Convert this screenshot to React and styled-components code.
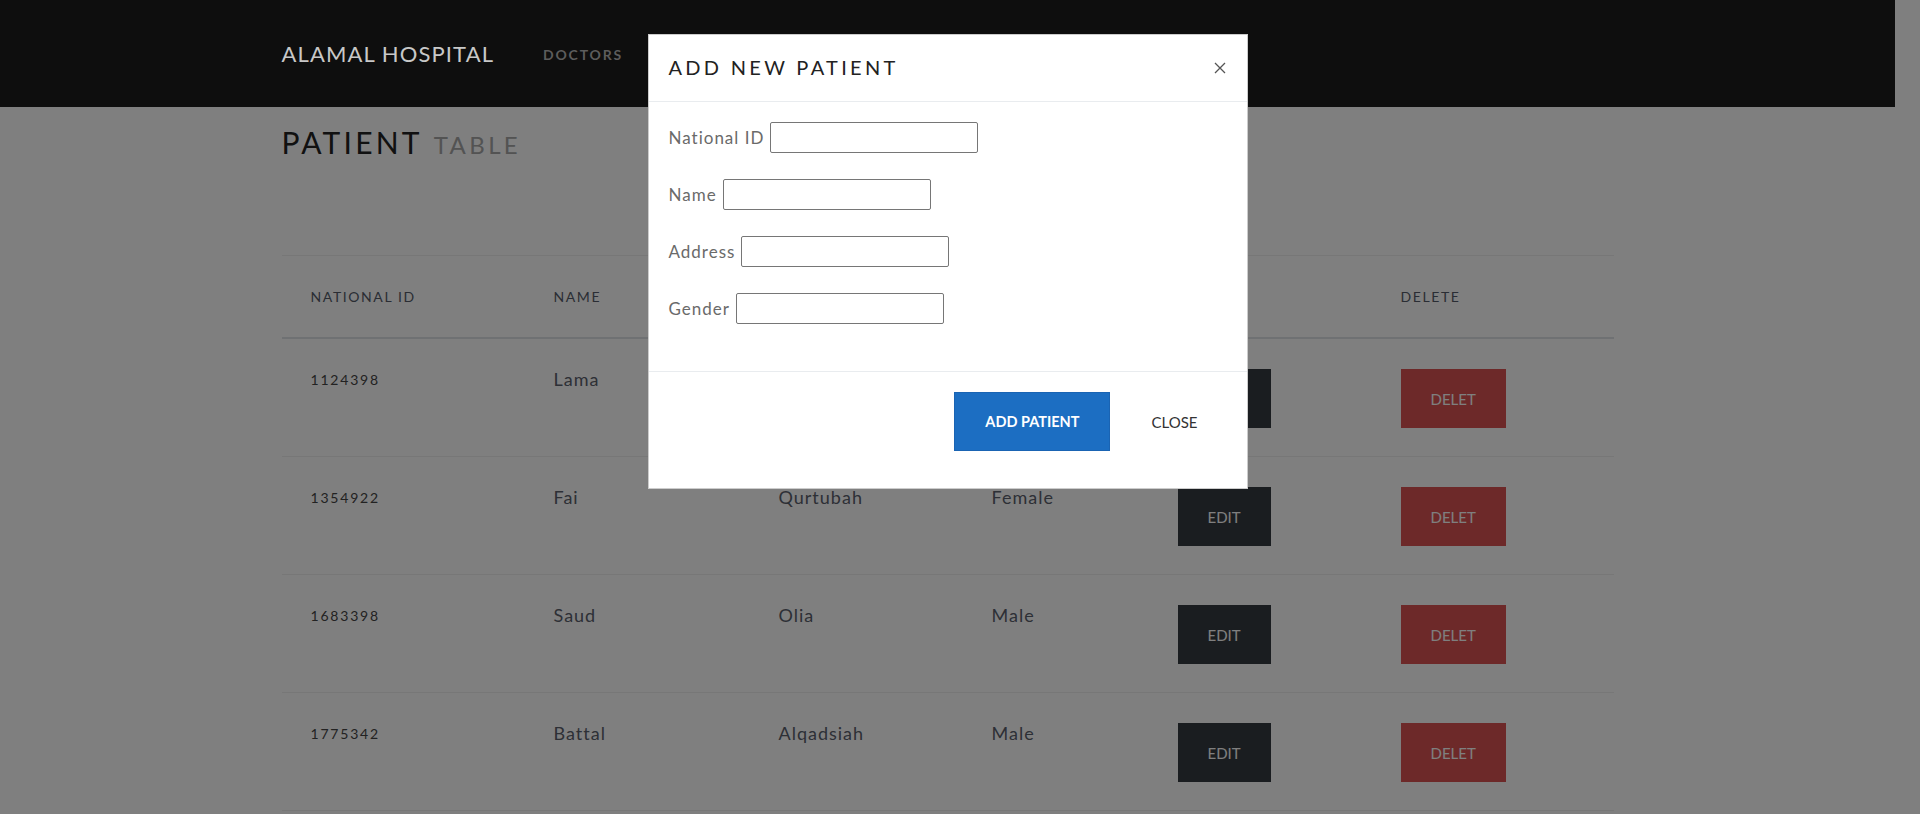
import React from "react";
import styled, { createGlobalStyle } from "styled-components";

const GlobalStyle = createGlobalStyle`
  html, body { margin: 0; padding: 0; }
  body {
    background: #ffffff;
    font-family: Lato, "Open Sans", Arial, sans-serif;
    overflow: hidden;
    padding-right: 25px;
  }
  * { box-sizing: border-box; }
`;

const Navbar = styled.nav`
  position: relative;
  z-index: 20;
  height: 107px;
  background: #0e0e0e;
`;

const Container = styled.div`
  max-width: 1332px;
  margin: 0 auto;
`;

const NavInner = styled(Container)`
  height: 100%;
  display: flex;
  align-items: center;
  gap: 49px;
`;

const Brand = styled.a`
  font-size: 22px;
  letter-spacing: 1.1px;
  color: #c8c8c8;
  text-decoration: none;
  padding-bottom: 1px;
`;

const NavLink = styled.a`
  font-size: 14px;
  font-weight: 700;
  letter-spacing: 1.8px;
  color: #5c5c5c;
  text-decoration: none;
  padding-top: 2px;
`;

const Heading = styled.h1`
  margin: 17px 0 92px;
  font-size: 30px;
  line-height: 36px;
  font-weight: 400;
  letter-spacing: 3.2px;
  color: #222;
`;

const HeadingSub = styled.span`
  font-size: 24px;
  letter-spacing: 3.4px;
  color: #a6a6a6;
  margin-left: 11px;
`;

const Table = styled.table`
  width: 100%;
  table-layout: fixed;
  border-collapse: collapse;
  border-top: 1px solid #eeeeee;
`;

const Col = styled.col`
  width: ${(p) => p.$w}px;
`;

const HeadCell = styled.th`
  text-align: left;
  padding: 30px 29px 30px;
  font-size: 14px;
  line-height: 21px;
  font-weight: 400;
  letter-spacing: 1.6px;
  color: #555b69;
  border-bottom: 2px solid #dee2e6;
`;

const BodyRow = styled.tr`
  border-bottom: 1px solid #eeeeee;
`;

const IdCell = styled.th`
  text-align: left;
  vertical-align: top;
  padding: 30px 29px 28px;
  font-size: 14px;
  line-height: 21px;
  font-weight: 400;
  letter-spacing: 1.8px;
  color: #454545;
`;

const Cell = styled.td`
  vertical-align: top;
  padding: 30px 29px 28px;
  font-size: 18px;
  line-height: 21px;
  letter-spacing: 1px;
  color: #5b606c;
`;

const RowButton = styled.button`
  display: block;
  height: 59px;
  padding: 0 30px;
  border: none;
  border-radius: 0;
  font-family: inherit;
  font-size: 15px;
  color: #ffffff;
  background: ${(p) => (p.$danger ? "#da5353" : "#343a40")};
`;

const Backdrop = styled.div`
  position: fixed;
  inset: 0;
  z-index: 10;
  background: rgba(0, 0, 0, 0.5);
`;

const ModalLayer = styled.div`
  position: fixed;
  inset: 0;
  z-index: 30;
  padding: 34px 25px 0 0;
  display: flex;
  justify-content: center;
  align-items: flex-start;
`;

const Modal = styled.div`
  width: 600px;
  background: #ffffff;
  border: 1px solid rgba(0, 0, 0, 0.2);
`;

const ModalHeader = styled.div`
  height: 67px;
  padding: 0 20px 3px;
  display: flex;
  align-items: center;
  justify-content: space-between;
  border-bottom: 1px solid #e9ecef;
`;

const ModalTitle = styled.h5`
  margin: 0;
  font-size: 20px;
  font-weight: 400;
  letter-spacing: 3.3px;
  color: #222;
`;

const CloseX = styled.button`
  border: none;
  background: none;
  padding: 0;
  width: 12px;
  height: 12px;
  display: flex;
  margin-top: 2px;
  margin-right: 1px;
`;

const ModalBody = styled.div`
  padding: 20px 20px 47px;
  display: flex;
  flex-direction: column;
  gap: 26px;
`;

const Field = styled.div`
  display: flex;
  align-items: center;
  gap: 6px;
`;

const Label = styled.label`
  font-size: 17px;
  letter-spacing: 1px;
  color: #6a6a6a;
`;

const Input = styled.input`
  width: 208px;
  height: 31px;
  border: 1px solid #767676;
  border-radius: 2px;
  padding: 0 4px;
  font-family: inherit;
  font-size: 15px;
`;

const ModalFooter = styled.div`
  border-top: 1px solid #e9ecef;
  padding: 20px 18px 37px;
  display: flex;
  justify-content: flex-end;
  gap: 10px;
`;

const FooterButton = styled.button`
  height: 59px;
  padding: 0 30px;
  border: 1px solid ${(p) => (p.$primary ? "#1a64b3" : "transparent")};
  border-radius: 0;
  background: ${(p) => (p.$primary ? "#1c6ec2" : "transparent")};
  color: ${(p) => (p.$primary ? "#ffffff" : "#333333")};
  font-family: inherit;
  font-size: ${(p) => (p.$primary ? "14.5px" : "15px")};
  font-weight: ${(p) => (p.$primary ? 700 : 400)};
`;

const columns = [243, 225, 213, 186, 223, 242];
const headers = ["NATIONAL ID", "NAME", "ADDRESS", "GENDER", "EDIT", "DELETE"];
const patients = [
  { id: "1124398", name: "Lama", address: "Alyarmouk", gender: "Female" },
  { id: "1354922", name: "Fai", address: "Qurtubah", gender: "Female" },
  { id: "1683398", name: "Saud", address: "Olia", gender: "Male" },
  { id: "1775342", name: "Battal", address: "Alqadsiah", gender: "Male" },
];
const fields = ["National ID", "Name", "Address", "Gender"];

export default function App() {
  return (
    <>
      <GlobalStyle />
      <Navbar>
        <NavInner>
          <Brand href="#">ALAMAL HOSPITAL</Brand>
          <NavLink href="#">DOCTORS</NavLink>
        </NavInner>
      </Navbar>
      <Container>
        <Heading>
          PATIENT<HeadingSub>TABLE</HeadingSub>
        </Heading>
        <Table>
          <colgroup>
            {columns.map((w, i) => (
              <Col key={i} $w={w} />
            ))}
          </colgroup>
          <thead>
            <tr>
              {headers.map((h) => (
                <HeadCell key={h}>{h}</HeadCell>
              ))}
            </tr>
          </thead>
          <tbody>
            {patients.map((p) => (
              <BodyRow key={p.id}>
                <IdCell scope="row">{p.id}</IdCell>
                <Cell>{p.name}</Cell>
                <Cell>{p.address}</Cell>
                <Cell>{p.gender}</Cell>
                <Cell>
                  <RowButton>EDIT</RowButton>
                </Cell>
                <Cell>
                  <RowButton $danger>DELET</RowButton>
                </Cell>
              </BodyRow>
            ))}
          </tbody>
        </Table>
      </Container>
      <Backdrop />
      <ModalLayer>
        <Modal>
          <ModalHeader>
            <ModalTitle>ADD NEW PATIENT</ModalTitle>
            <CloseX aria-label="Close">
              <svg width="12" height="12" viewBox="0 0 12 12">
                <path d="M1 1 L11 11 M11 1 L1 11" stroke="#555" strokeWidth="1.3" fill="none" />
              </svg>
            </CloseX>
          </ModalHeader>
          <ModalBody>
            {fields.map((f) => (
              <Field key={f}>
                <Label>{f}</Label>
                <Input type="text" />
              </Field>
            ))}
          </ModalBody>
          <ModalFooter>
            <FooterButton $primary>ADD PATIENT</FooterButton>
            <FooterButton>CLOSE</FooterButton>
          </ModalFooter>
        </Modal>
      </ModalLayer>
    </>
  );
}
